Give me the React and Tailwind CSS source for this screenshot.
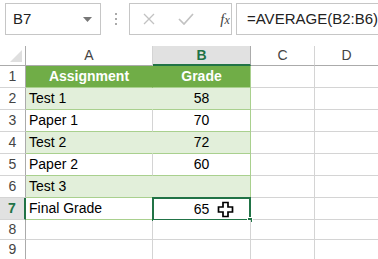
import React from 'react'

const rows = [
  { n: 1, a: 'Assignment', b: 'Grade', kind: 'head' },
  { n: 2, a: 'Test 1', b: '58', kind: 'band' },
  { n: 3, a: 'Paper 1', b: '70', kind: 'plain' },
  { n: 4, a: 'Test 2', b: '72', kind: 'band' },
  { n: 5, a: 'Paper 2', b: '60', kind: 'plain' },
  { n: 6, a: 'Test 3', b: '', kind: 'band' },
  { n: 7, a: 'Final Grade', b: '65', kind: 'plain', active: true },
  { n: 8, a: '', b: '', kind: 'empty' },
  { n: 9, a: '', b: '', kind: 'empty' },
]

const font = { fontFamily: '"Liberation Sans", Arial, sans-serif' }

const Cursor = () => (
  <svg width="17" height="17" viewBox="0 0 17 17" className="absolute left-[63px] top-[2px]">
    <path d="M6 1.5h5v4.5h4.5v5H11v4.5H6V11H1.5V6H6z" fill="#fff" stroke="#000" strokeWidth="1.7" />
  </svg>
)

const FormulaBar = () => (
  <div className="h-[46px] flex items-start pt-[3px] pl-[5px]">
    <div className="w-[102px] h-[32px] border border-[#c6c6c6] flex items-center pl-[7px] pr-[8px] justify-between">
      <span className="text-[15px] text-[#222]">B7</span>
      <svg width="9" height="5" viewBox="0 0 9 5"><path d="M0 0h9L4.5 5z" fill="#777" /></svg>
    </div>
    <div className="w-[30px] h-[32px] flex flex-col items-center justify-center gap-[3px] pl-[2px]">
      <span className="w-[2px] h-[2px] bg-[#aaa]" />
      <span className="w-[2px] h-[2px] bg-[#aaa]" />
      <span className="w-[2px] h-[2px] bg-[#aaa]" />
    </div>
    <div className="w-[110px] h-[32px] border border-[#c6c6c6] flex items-center">
      <svg width="12" height="12" viewBox="0 0 12 12" className="ml-[13px]">
        <path d="M1 1l10 10M11 1L1 11" stroke="#c2c2c2" strokeWidth="1.3" />
      </svg>
      <svg width="16" height="12" viewBox="0 0 16 12" className="ml-[23px]">
        <path d="M1 6l5 5 9-10" stroke="#c2c2c2" strokeWidth="1.7" fill="none" />
      </svg>
      <span className="ml-[26px] text-[15px] italic text-[#444]" style={{ fontFamily: '"Liberation Serif", serif' }}>
        f<span className="text-[12px]">x</span>
      </span>
    </div>
    <div className="ml-[4px] flex-1 h-[32px] border border-r-0 border-[#c6c6c6] flex items-center pl-[10px]">
      <span className="text-[15px] text-[#222]">=AVERAGE(B2:B6)</span>
    </div>
  </div>
)

export default function App() {
  return (
    <div className="w-[378px] h-[259px] bg-white overflow-hidden" style={font}>
      <FormulaBar />
      <div className="grid grid-cols-[26px_127px_98px_64px_1fr] text-[14px]">
        {/* column headers */}
        <div className="h-[20px] border-r border-b border-[#ababab] relative">
          <svg width="12" height="12" viewBox="0 0 12 12" className="absolute right-[3px] bottom-[3px]">
            <path d="M12 0V12H0z" fill="#dfdfdf" />
          </svg>
        </div>
        <div className="h-[20px] border-r border-b border-[#d4d4d4] border-b-[#ababab] flex items-center justify-center text-[#444]">A</div>
        <div className="h-[20px] bg-[#e1e1e1] border-r border-[#ababab] border-b-2 border-b-[#217346] flex items-center justify-center font-bold text-[#217346]">B</div>
        <div className="h-[20px] border-r border-b border-[#d4d4d4] border-b-[#ababab] flex items-center justify-center text-[#444]">C</div>
        <div className="h-[20px] border-b border-[#ababab] flex items-center justify-center text-[#444]">D</div>

        {rows.map((r) => {
          const h = r.kind === 'empty' ? 'h-[20px]' : 'h-[22px]'
          const table = r.kind !== 'empty'
          const fill =
            r.kind === 'head' ? 'bg-[#70ad47]' : r.kind === 'band' ? 'bg-[#e2efda]' : 'bg-white'
          const bottom = table ? 'border-b-[#a9d08e]' : 'border-b-[#d4d4d4]'
          const aRight = r.kind === 'plain' || r.kind === 'empty' ? 'border-r-[#d4d4d4]' : 'border-r-transparent'
          const txt = r.kind === 'head' ? 'font-bold text-white' : 'text-black'
          return (
            <React.Fragment key={r.n}>
              <div
                className={`${h} border-b border-b-[#d4d4d4] flex items-center justify-center ${
                  r.active
                    ? 'bg-[#e1e1e1] font-bold text-[#217346] border-r-2 border-r-[#217346]'
                    : 'text-[#444] border-r border-r-[#ababab]'
                }`}
              >
                {r.n}
              </div>
              <div
                className={`${h} ${fill} border-b border-r ${bottom} ${aRight} flex items-center ${
                  r.kind === 'head' ? 'justify-center' : 'pl-[3px]'
                } ${txt}`}
              >
                {r.a}
              </div>
              <div
                className={`${h} ${fill} border-b border-r ${bottom} ${
                  table ? 'border-r-[#a9d08e]' : 'border-r-[#d4d4d4]'
                } flex items-center justify-center ${txt} relative`}
              >
                {r.active ? (
                  <div className="absolute left-[-1px] top-[-1px] w-[99px] h-[24px] border-2 border-[#217346] flex items-center justify-center">
                    <span>{r.b}</span>
                    <Cursor />
                    <span className="absolute right-[-4px] bottom-[-4px] w-[6px] h-[6px] bg-[#217346] border border-white" />
                  </div>
                ) : (
                  r.b
                )}
              </div>
              <div className={`${h} border-b border-r border-[#d4d4d4]`} />
              <div className={`${h} border-b border-[#d4d4d4]`} />
            </React.Fragment>
          )
        })}
      </div>
    </div>
  )
}
